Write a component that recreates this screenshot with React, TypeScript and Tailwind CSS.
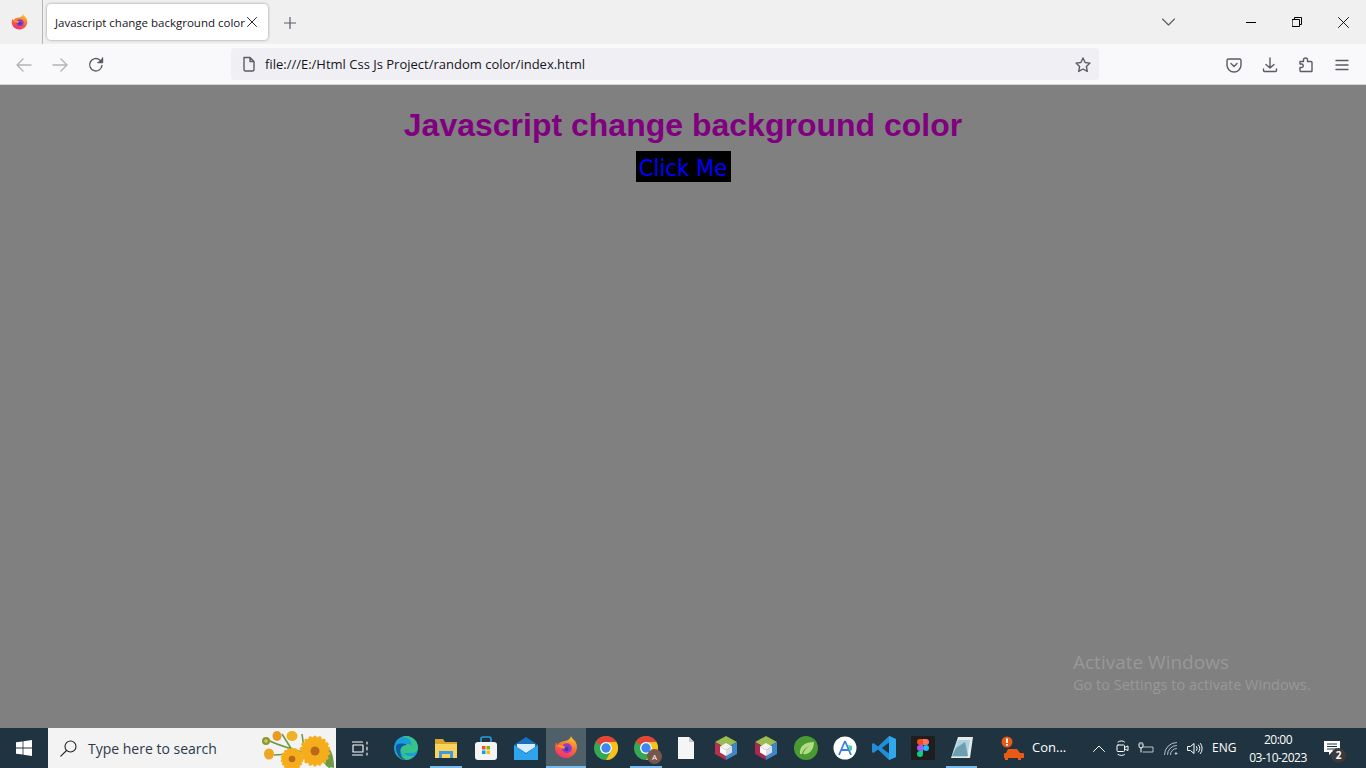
import type { ReactNode } from 'react';

const UI_FONT = "font-['Open_Sans','Noto_Sans',sans-serif]";

function Daisy({ cx, cy, r }: { cx: number; cy: number; r: number }) {
  const petals = Array.from({ length: 18 }, (_, i) => (i * 360) / 18);
  return (
    <g>
      {petals.map((a) => (
        <ellipse key={a} cx={cx} cy={cy - r * 0.62} rx={r * 0.2} ry={r * 0.42} fill="#f5ad1c" transform={`rotate(${a} ${cx} ${cy})`} />
      ))}
      <circle cx={cx} cy={cy} r={r * 0.3} fill="#b9681c" />
    </g>
  );
}

function FlowerArt() {
  return (
    <svg width="74" height="40" viewBox="0 0 74 40">
      <path d="M6 12 C20 20 40 22 60 32 L68 40 M12 27 L30 26 M20 6 L30 22 M40 6 L42 20" stroke="#6f9a45" strokeWidth="1.600" fill="none" />
      <path d="M62 16 C70 20 72 30 72 40 L64 38 Z" fill="#6f9a45" />
      <circle cx="4" cy="13" r="4" fill="#8b9a2e" />
      <circle cx="4" cy="13" r="1.800" fill="#d5c866" />
      <ellipse cx="15" cy="8" rx="4.500" ry="5" fill="#e99a24" />
      <ellipse cx="30" cy="8" rx="5.500" ry="5" fill="#efb321" />
      <ellipse cx="7" cy="26" rx="5" ry="5.500" fill="#eea520" />
      <Daisy cx={30} cy={31} r={11} />
      <Daisy cx={53} cy={23} r={15} />
    </svg>
  );
}

function WindowsLogo() {
  return (
    <svg width="16" height="16" viewBox="0 0 16 16" fill="#fff">
      <path d="M0 2.300 6.600 1.400V7.500H0ZM7.400 1.300 16 0V7.500H7.400ZM0 8.400H6.600V14.600L0 13.700ZM7.400 8.400H16V16L7.400 14.800Z" />
    </svg>
  );
}

function FirefoxIcon({ size }: { size: number }) {
  return (
    <svg width={size} height={size} viewBox="0 0 24 24">
      <defs>
        <linearGradient id={`ff${size}`} x1="0.7" y1="0" x2="0.3" y2="1">
          <stop offset="0" stopColor="#ffc62e" />
          <stop offset="0.5" stopColor="#ff6a30" />
          <stop offset="1" stopColor="#ee2c7c" />
        </linearGradient>
      </defs>
      <path d="M17 0c.6 2.400 3 3.400 4.600 6 1.800 3.200 2 7.600-.4 11-2 2.900-5.400 5-9.200 5C6 22 1 17.500 1 11.800c0-2 .5-3.800 1.400-5.200.1 1 .5 1.800 1 2.300C4.500 7 7 5.400 9.500 5.200 12.500 5 16.500 3.500 17 0Z" fill={`url(#ff${size})`} />
      <circle cx="12.800" cy="12.300" r="5" fill="#8a3fc9" />
      <path d="M3 9.500c3-1 5-.5 6.500.5 2 1.300 3.500.5 4.500 2-1 1-3.500 1-5 .5-2-.5-4-1-6-3Z" fill="#ff9a2b" />
      <circle cx="12.500" cy="13" r="2.200" fill="#5a2ab8" />
    </svg>
  );
}

function ChromeIcon() {
  return (
    <svg width="24" height="24" viewBox="0 0 24 24">
      <circle cx="12" cy="12" r="12" fill="#34a853" />
      <path d="M12 0a12 12 0 0 1 10.400 6H12a6 6 0 0 0-5.200 3L1.600 6A12 12 0 0 1 12 0Z" fill="#ea4335" />
      <path d="M22.400 6A12 12 0 0 1 12 24l5.200-9A6 6 0 0 0 17.200 9 6 6 0 0 0 12 6Z" fill="#fbc116" />
      <circle cx="12" cy="12" r="6" fill="#fff" />
      <circle cx="12" cy="12" r="4.700" fill="#4285f4" />
    </svg>
  );
}

function BoxIcon({ tint }: { tint: string }) {
  return (
    <svg width="22" height="24" viewBox="0 0 22 24">
      <path d="M11 0 22 6 11 12 0 6Z" fill="#9bbd4f" />
      <path d="M0 6 11 12V24L0 18Z" fill={tint} />
      <path d="M22 6 11 12V24L22 18Z" fill="#3f86c6" />
      <path d="M11 7 17 10.500 11 14 5 10.500Z" fill="#f3f3ee" />
      <path d="M5 10.500 11 14V20L5 16.500Z" fill="#fff" />
      <path d="M17 10.500 11 14V20L17 16.500Z" fill="#d9dee0" />
    </svg>
  );
}

const Stroke = ({ children, w = 16, h = 16, vb = '0 0 16 16', color = '#5b5b66', sw = 1.4 }: { children: ReactNode; w?: number; h?: number; vb?: string; color?: string; sw?: number }) => (
  <svg width={w} height={h} viewBox={vb} fill="none" stroke={color} strokeWidth={sw} strokeLinecap="round" strokeLinejoin="round">
    {children}
  </svg>
);

function TabBar() {
  return (
    <div className="flex h-[44px] items-stretch bg-[#f0f0f0]">
      <div className="flex w-[43px] items-center justify-center border-r border-[#b5b5b8] pr-[3px]">
        <FirefoxIcon size={17} />
      </div>
      <div className="flex items-center pl-[4px]">
        <div className="flex h-[36px] w-[221px] items-center rounded-[4px] bg-white pl-[8px] shadow-[0_0_3px_rgba(0,0,0,0.4)]">
          <span className={`w-[192px] pt-px text-[11.500px] whitespace-nowrap text-[#15141a] ${UI_FONT}`}>Javascript change background color</span>
          <Stroke w={10} h={10} vb="0 0 10 10" color="#2b2a33" sw={1}>
            <path d="M.5.5l9 9M9.500.5l-9 9" />
          </Stroke>
        </div>
      </div>
      <div className="flex w-[43px] items-center justify-center pt-[1px]">
        <Stroke w={12} h={12} vb="0 0 12 12" sw={1.2}>
          <path d="M6 .5v11M.5 6h11" />
        </Stroke>
      </div>
      <div className="flex-1" />
      <div className="flex w-[46px] items-center justify-center">
        <Stroke w={13} h={8} vb="0 0 13 8" sw={1.1}>
          <path d="M.5 1l6 6 6-6" />
        </Stroke>
      </div>
      <div className="w-[37px]" />
      <div className="flex w-[46px] items-center justify-center">
        <div className="h-px w-[10px] bg-black" />
      </div>
      <div className="flex w-[46px] items-center justify-center">
        <Stroke w={10} h={10} vb="0 0 10 10" color="#000" sw={1}>
          <path d="M.5 2.500h7v7h-7zM2.500 2.500V.5h7v7h-2" />
        </Stroke>
      </div>
      <div className="flex w-[46px] items-center justify-center">
        <Stroke w={11} h={11} vb="0 0 11 11" color="#000" sw={0.9}>
          <path d="M.5.5l10 10M10.500.5l-10 10" />
        </Stroke>
      </div>
    </div>
  );
}

function NavBar() {
  return (
    <div className="flex h-[41px] items-center border-b border-[#d4d4d8] bg-[#f9f9fb]">
      <div className="flex w-[231px] items-center pt-[1px]">
        <div className="flex w-[42px] justify-center pl-[6px]">
          <Stroke color="#b3b3b8"><path d="M15 8H1M7 2 1 8l6 6" /></Stroke>
        </div>
        <div className="flex w-[36px] justify-center">
          <Stroke color="#b3b3b8"><path d="M1 8h14M9 2l6 6-6 6" /></Stroke>
        </div>
        <div className="flex w-[36px] justify-center">
          <Stroke>
            <path d="M14 8.500A6.200 6.200 0 1 1 11.800 3L14 5" />
            <path d="M14.500 1v4.500H10" fill="#5b5b66" />
          </Stroke>
        </div>
      </div>
      <div className="flex h-[32px] w-[868px] items-center rounded-[4px] bg-[#f0f0f4] pl-[10px]">
        <Stroke>
          <path d="M3 1.500h6l4 4v8a1.500 1.500 0 0 1-1.500 1.500h-7A1.500 1.500 0 0 1 3 13.500ZM9 1.500v4h4" />
        </Stroke>
        <span className={`ml-[8px] flex-1 pt-[2px] text-[13px] text-[#15141a] ${UI_FONT}`}>file:///E:/Html Css Js Project/random color/index.html</span>
        <div className="mr-[8px] flex pt-[1px]">
          <Stroke>
            <path d="M8 1l2.100 4.500 4.900.6-3.600 3.400.9 4.900L8 12l-4.300 2.400.9-4.900L1 6.100l4.900-.6Z" />
          </Stroke>
        </div>
      </div>
      <div className="flex flex-1 items-center justify-end pt-[1px] pr-[6px]">
        <div className="flex w-[36px] justify-center">
          <Stroke>
            <path d="M2.500 2h11A1.500 1.500 0 0 1 15 3.500V8A7 7 0 0 1 1 8V3.500A1.500 1.500 0 0 1 2.500 2Z" />
            <path d="M5 6.500l3 3 3-3" />
          </Stroke>
        </div>
        <div className="flex w-[36px] justify-center">
          <Stroke>
            <path d="M8 1v10M4 7.500 8 11l4-3.500M1.500 12v1.500a1 1 0 0 0 1 1h11a1 1 0 0 0 1-1V12" />
          </Stroke>
        </div>
        <div className="flex w-[36px] justify-center">
          <Stroke>
            <path d="M2 5h3.500V3.500a2 2 0 0 1 4 0V5H13a1 1 0 0 1 1 1v8.500a.5.5 0 0 1-.5.5H3a1 1 0 0 1-1-1v-3h1.500a1.500 1.500 0 0 0 0-3.500H2Z" transform="translate(0 -.5)" />
          </Stroke>
        </div>
        <div className="flex w-[36px] justify-center">
          <Stroke w={14} h={12} vb="0 0 14 12">
            <path d="M1 1.500h12M1 6h12M1 10.500h12" />
          </Stroke>
        </div>
      </div>
    </div>
  );
}

function AppSlot({ children, active, open, narrow }: { children: ReactNode; active?: boolean; open?: boolean; narrow?: boolean }) {
  return (
    <div className={`relative flex h-full items-center justify-center ${narrow ? 'w-[39px]' : 'w-[40px]'} ${active ? 'bg-[#4f6069]' : ''}`}>
      {children}
      {(open || active) && <div className={`absolute bottom-0 h-[2px] bg-[#76b9ed] ${active ? 'inset-x-0' : 'inset-x-[4px]'}`} />}
    </div>
  );
}

function TaskApps() {
  return (
    <div className="flex h-full">
      <AppSlot>
        <svg width="24" height="24" viewBox="0 0 24 24">
          <circle cx="12" cy="12" r="12" fill="#1b9bd7" />
          <path d="M12 0a12 12 0 0 1 12 12c0 3-3 5-6.500 5H10c1 2 3 3 6 3 2 0 4-.5 5-1.500A12 12 0 0 1 12 24C5 24 0 18 2 10c1.500 5 3 9 8 10-3-2-4-5-3-8 1-3 4-4 7-4 2 0 3.500 1 4 2C17 4 14 .5 7 1.500A12 12 0 0 1 12 0Z" fill="#36c38a" />
          <path d="M2 10C1 17 6 24 12 24c-5-2-7-8-5-12 1-2 3-3 6-3-4-2-9-2-11 1Z" fill="#0c59a4" />
        </svg>
      </AppSlot>
      <AppSlot open>
        <svg width="22" height="20" viewBox="0 0 22 20">
          <path d="M0 1h8l2 3h12v15H0Z" fill="#dba42a" />
          <path d="M0 6h22v14H0Z" fill="#fad35c" />
          <path d="M4 13h14v7h-3v-4H7v4H4Z" fill="#3e9be0" />
        </svg>
      </AppSlot>
      <AppSlot>
        <svg width="22" height="24" viewBox="0 0 22 24">
          <path d="M6 6V3a2 2 0 0 1 2-2h6a2 2 0 0 1 2 2v3" stroke="#2a9fe0" strokeWidth="1.600" fill="none" />
          <rect x="0" y="6" width="22" height="18" rx="3" fill="#f4f4f4" />
          <rect x="7" y="10" width="3.500" height="3.500" fill="#f25022" />
          <rect x="11.500" y="10" width="3.500" height="3.500" fill="#7fba00" />
          <rect x="7" y="14.500" width="3.500" height="3.500" fill="#00a4ef" />
          <rect x="11.500" y="14.500" width="3.500" height="3.500" fill="#ffb900" />
        </svg>
      </AppSlot>
      <AppSlot>
        <svg width="24" height="23" viewBox="0 0 24 23">
          <path d="M0 8 12 0l12 8v15H0Z" fill="#1b6fc0" />
          <path d="M0 8l12 9 12-9v15H0Z" fill="#2ea4ec" />
          <path d="M3 7h18v3l-9 6-9-6Z" fill="#d8eefa" />
        </svg>
      </AppSlot>
      <AppSlot active>
        <FirefoxIcon size={24} />
      </AppSlot>
      <AppSlot>
        <ChromeIcon />
      </AppSlot>
      <AppSlot open>
        <ChromeIcon />
        <div className={`absolute top-[21px] left-[21px] flex h-[15px] w-[15px] items-center justify-center rounded-full bg-[#77574c] text-[8px] text-white ${UI_FONT}`}>A</div>
      </AppSlot>
      <AppSlot>
        <svg width="16" height="22" viewBox="0 0 16 22">
          <path d="M0 0h11l5 5v17H0Z" fill="#f5f5f5" />
          <path d="M11 0l5 5h-5Z" fill="#c9c9c9" />
        </svg>
      </AppSlot>
      <AppSlot>
        <BoxIcon tint="#b5314f" />
      </AppSlot>
      <AppSlot>
        <BoxIcon tint="#a8284f" />
      </AppSlot>
      <AppSlot narrow>
        <svg width="24" height="24" viewBox="0 0 24 24">
          <circle cx="12" cy="12" r="12" fill="#4a9a34" />
          <path d="M6 18C5 10 11 6 20 6c0 8-5 13-11 12 1-4 4-7 7-8-4 1-7 4-8 8Z" fill="#b3dc84" />
        </svg>
      </AppSlot>
      <AppSlot narrow>
        <svg width="24" height="24" viewBox="0 0 24 24">
          <circle cx="12" cy="12" r="11.500" fill="#fff" />
          <path d="M12 5 6 19M12 5l6 14M8 14h8" stroke="#3a7ee0" strokeWidth="1.800" fill="none" />
          <path d="M15 9l4 1 0 4-2 1Z" fill="#3ddc84" />
        </svg>
      </AppSlot>
      <AppSlot narrow>
        <svg width="24" height="24" viewBox="0 0 24 24">
          <path d="M17 0 24 3v18l-7 3L6 13.500 1.500 17 0 16v-8l1.500-1L6 10.500Z" fill="#1f8fd8" />
          <path d="M17 0 24 3v18l-7 3Z" fill="#30a8ef" />
          <path d="M17 6.500 10 12l7 5.500Z" fill="#1f3340" />
        </svg>
      </AppSlot>
      <AppSlot narrow>
        <div className="flex h-[24px] w-[24px] items-center justify-center rounded-[2px] bg-[#1e1e1e]">
          <svg width="12" height="18" viewBox="0 0 12 18">
            <path d="M0 3a3 3 0 0 1 3-3h3v6H3a3 3 0 0 1-3-3Z" fill="#f24e1e" />
            <path d="M6 0h3a3 3 0 0 1 0 6H6Z" fill="#ff7262" />
            <path d="M0 9a3 3 0 0 1 3-3h3v6H3a3 3 0 0 1-3-3Z" fill="#a259ff" />
            <circle cx="9" cy="9" r="3" fill="#1abcfe" />
            <path d="M0 15a3 3 0 0 1 3-3h3v3a3 3 0 0 1-6 0Z" fill="#0acf83" />
          </svg>
        </div>
      </AppSlot>
      <AppSlot open narrow>
        <svg width="24" height="24" viewBox="0 0 24 24">
          <path d="M8 1h15l-3 21H1Z" fill="#e7eaea" />
          <path d="M8 4h12l-3 17H2Z" fill="#a9d3df" />
          <path d="M6 12l9-6 3 14H2Z" fill="#6e9fb0" />
        </svg>
      </AppSlot>
    </div>
  );
}

function Tray() {
  return (
    <div className="flex h-full flex-1 items-center text-white">
      <div className="ml-[19px] flex w-[25px] justify-center">
        <svg width="25" height="24" viewBox="0 0 25 24">
          <circle cx="7" cy="6" r="5.500" fill="#e85a16" />
          <rect x="6" y="2.500" width="2" height="4.500" fill="#fff" />
          <rect x="6" y="8" width="2" height="1.600" fill="#fff" />
          <path d="M8 13h9l3 4h3a1 1 0 0 1 1 1v4h-3v2h-3v-2H8v2H5v-2H4v-4a1 1 0 0 1 1-1h1Z" fill="#e85a16" />
        </svg>
      </div>
      <span className={`ml-[7px] w-[56px] text-[13px] ${UI_FONT}`}>Con...</span>
      <div className="flex w-[22px] justify-center">
        <Stroke w={12} h={7} vb="0 0 12 7" color="#fff" sw={1}>
          <path d="M.5 6.500 6 1l5.500 5.500" />
        </Stroke>
      </div>
      <div className="flex w-[24px] justify-center">
        <Stroke w={13} h={16} vb="0 0 13 16" color="#fff" sw={1}>
          <rect x="1" y="5" width="7.500" height="6.500" rx="1" />
          <path d="M8.500 7.500 12 6v4.500L8.500 9M2 2c2-1.500 5-1.500 6.500 0M2 14.500c2 1.300 5 1.300 6.500 0" />
        </Stroke>
      </div>
      <div className="flex w-[24px] justify-center">
        <Stroke w={16} h={12} vb="0 0 16 12" color="#fff" sw={1}>
          <path d="M5 5h10v5H5" stroke="#b9c2c8" />
          <path d="M1 2v2a2 2 0 0 0 4 0V2M3 6v4M2 .5v1.500M4 .5v1.500" />
        </Stroke>
      </div>
      <div className="flex w-[25px] justify-center">
        <Stroke w={14} h={13} vb="0 0 14 13" color="#c8d0d5" sw={0.9}>
          <path d="M.5 12.500A12 12 0 0 1 12.500.5M3.500 12.500a9 9 0 0 1 9-9M6.500 12.500a6 6 0 0 1 6-6" />
          <circle cx="12" cy="11.500" r=".8" fill="#fff" />
        </Stroke>
      </div>
      <div className="flex w-[23px] justify-center">
        <Stroke w={16} h={13} vb="0 0 16 13" color="#fff" sw={1}>
          <path d="M1 4.500h2.500L7 1.500v10l-3.500-3H1ZM9.500 4.500a3 3 0 0 1 0 4M11.500 3a5.500 5.500 0 0 1 0 7M13.500 1.500a8 8 0 0 1 0 10" />
        </Stroke>
      </div>
      <span className={`ml-[6px] w-[34px] text-[12px] ${UI_FONT}`}>ENG</span>
      <div className={`flex w-[64px] flex-col items-center pt-[1px] text-[12px] leading-[18px] ${UI_FONT}`}>
        <span className="tracking-[-0.5px]">20:00</span>
        <span className="tracking-[-0.5px]">03-10-2023</span>
      </div>
      <div className="relative ml-[12px] flex w-[20px] justify-center">
        <svg width="16" height="15" viewBox="0 0 16 15" fill="#fff">
          <path d="M0 0h16v11H8l-3 3v-3H0Z" />
          <path d="M3 3h10M3 5.500h10M3 8h10" stroke="#1f3340" strokeWidth="1" />
        </svg>
        <div className={`absolute top-[7px] left-[9px] flex h-[15px] w-[15px] items-center justify-center rounded-full bg-[#3a3a3a] text-[10px] font-bold text-white ${UI_FONT}`}>2</div>
      </div>
    </div>
  );
}

function Taskbar() {
  return (
    <div className="flex h-[40px] items-center bg-[#1f3340]">
      <div className="flex h-full w-[48px] items-center justify-center">
        <WindowsLogo />
      </div>
      <div className="flex h-full w-[288px] items-center justify-between overflow-hidden bg-[#f3f3f3] pl-[12px]">
        <div className="flex items-center">
          <Stroke w={17} h={17} vb="0 0 17 17" color="#222" sw={1.1}>
            <circle cx="10.500" cy="6.500" r="5.500" />
            <path d="M6.500 10.500.8 16.200" />
          </Stroke>
          <span className={`ml-[11px] text-[14px] text-[#2b3a4a] ${UI_FONT}`}>Type here to search</span>
        </div>
        <FlowerArt />
      </div>
      <div className="flex h-full w-[50px] items-center justify-center pr-[2px]">
        <Stroke w={17} h={15} vb="0 0 17 15" color="#fff" sw={1.1}>
          <path d="M.5 1h10M.5 14h10M1 4h10v7H1zM15 1v2M15 6v3M15 12v2" />
        </Stroke>
      </div>
      <TaskApps />
      <Tray />
    </div>
  );
}

export default function App() {
  return (
    <div className="flex h-screen w-full flex-col overflow-hidden">
      <TabBar />
      <NavBar />
      <main className="relative flex-1 bg-[#808080] text-center">
        <h1 className="mt-[20px] font-['Liberation_Sans',sans-serif] text-[32px] leading-[40px] font-bold text-[#800080]">Javascript change background color</h1>
        <button className="mt-[6px] h-[31px] w-[95px] bg-black pt-[3px] font-['DejaVu_Sans_Condensed','Noto_Sans',sans-serif] text-[23.5px] leading-[28px] text-[#0000ff]">Click Me</button>
        <div className={`absolute top-[564px] left-[1073px] text-left text-[#989898] ${UI_FONT}`}>
          <p className="text-[19px] leading-[26px]">Activate Windows</p>
          <p className="text-[14.500px] leading-[20px]">Go to Settings to activate Windows.</p>
        </div>
      </main>
      <Taskbar />
    </div>
  );
}
